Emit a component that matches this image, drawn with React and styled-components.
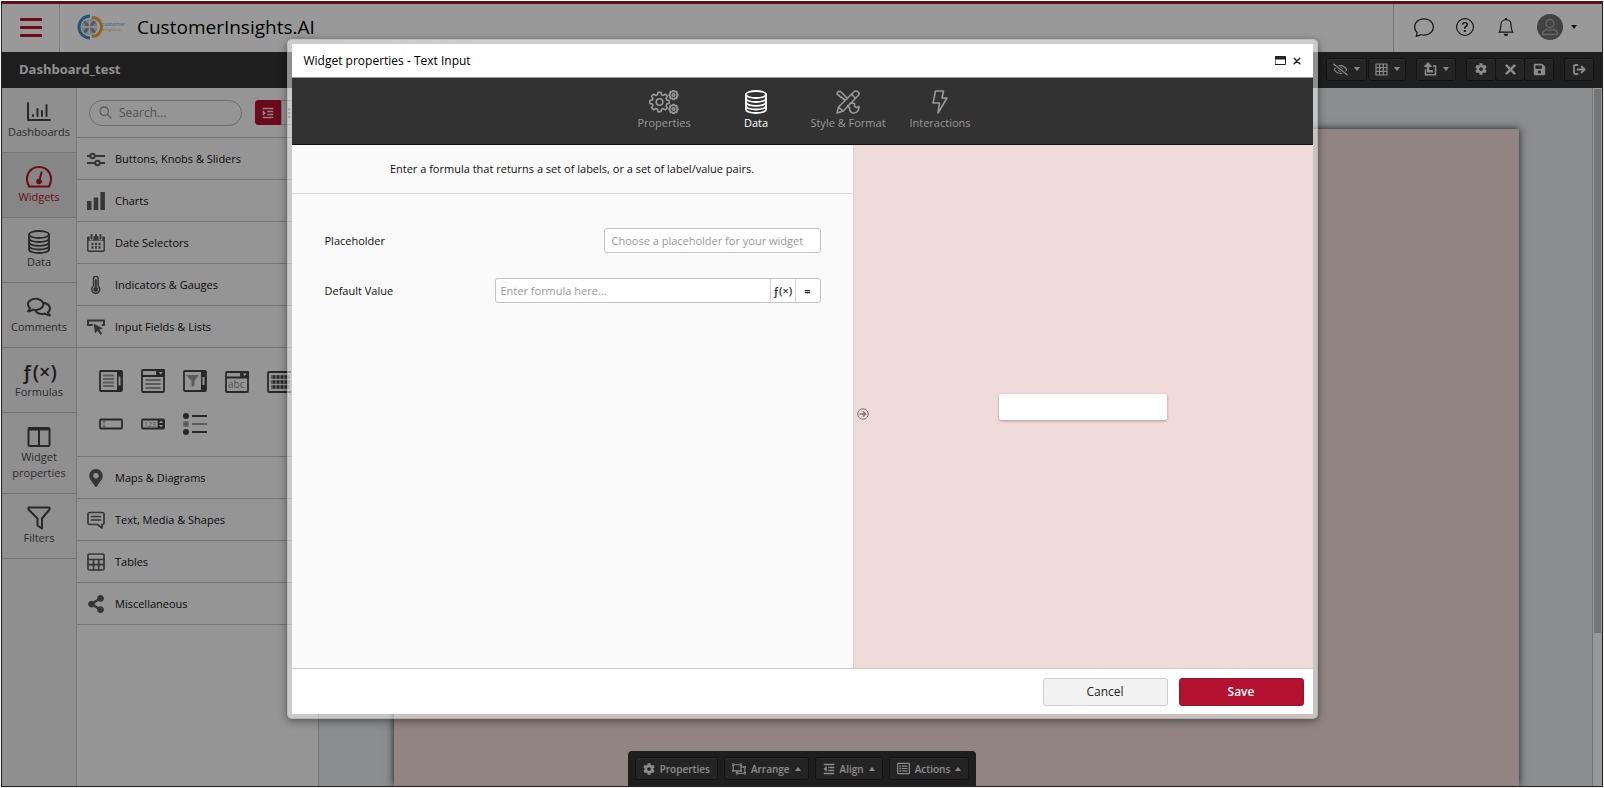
import React from 'react';
import styled, { createGlobalStyle, css } from 'styled-components';
import {
  FaCog, FaIndent, FaOutdent, FaListUl, FaRegObjectUngroup, FaRegListAlt, FaRegEyeSlash,
  FaMapMarkerAlt, FaShareAlt, FaRegComments, FaSave,
} from 'react-icons/fa';
import { BsChat, BsQuestionCircle, BsBell } from 'react-icons/bs';

const Global = createGlobalStyle`
  * { box-sizing: border-box; }
  html, body, #root { height: 100%; }
  body { margin: 0; background: #f4f4f4; font: 11px/16px "Open Sans", "Liberation Sans", sans-serif; color: #222; overflow: hidden; }
  button, input { font: inherit; color: inherit; margin: 0; padding: 0; }
  button { cursor: pointer; background: none; border: 0; }
  a { color: inherit; text-decoration: none; }
  svg { display: block; flex: none; }
`;

const Page = styled.div`height: 100%; padding: 1px;`;
const Frame = styled.div`
  position: relative; height: 100%; display: flex; flex-direction: column;
  border: 1px solid #222; background: #fff; overflow: hidden;
`;

/* Brand header */
const Header = styled.header`
  flex: none; height: 50px; display: flex; align-items: stretch;
  border-top: 2px solid #b41030; background: #fff;
`;
const MenuButton = styled.button`
  width: 58px; padding-bottom: 1px; display: flex; flex-direction: column; justify-content: center; align-items: center; gap: 5px;
  border-right: 1px solid #d0d0d0;
  i { width: 22px; height: 3px; border-radius: 1px; background: #b41030; }
`;
const Brand = styled.div`
  flex: 1; display: flex; align-items: center; gap: 10px; padding: 0 0 2px 17px;
  h1 { margin: 0; font-size: 19px; line-height: 26px; font-weight: 500; color: #000; }
`;
const Account = styled.div`
  display: flex; align-items: center; padding: 0 25px 2px 20px; gap: 21px;
  border-left: 1px solid #c8c8c8; color: #222;
`;
const IconButton = styled.button`min-width: 20px; display: flex; align-items: center; justify-content: center; gap: 8px;`;
const Avatar = styled.span`
  width: 26px; height: 26px; border-radius: 50%; background: #6e6e6e; color: #aaa;
  display: flex; align-items: center; justify-content: center;
`;
const Caret = styled.i`
  width: 0; height: 0; border: 3px solid transparent; 
  ${p => p.$up ? css`border-bottom: 4px solid; border-top: 0;` : css`border-top: 4px solid; border-bottom: 0;`}
`;

/* Dark dashboard bar */
const Bar = styled.div`
  flex: none; height: 36px; display: flex; align-items: center; justify-content: space-between;
  padding: 0 8px 2px 17px; background: #323232; color: #ededed;
  h2 { margin: 0; font-size: 13px; line-height: 20px; font-weight: 700; }
`;
const Tools = styled.div`display: flex; gap: 10px;`;
const ToolGroup = styled.div`display: flex; gap: ${p => p.$joined ? 0 : 1}px;`;
const DarkButton = styled.button`
  height: 23px; min-width: ${p => p.$width || 0}px; padding: 0 ${p => p.$pad || 0}px;
  display: flex; align-items: center; justify-content: center; gap: ${p => p.$gap || 6}px;
  background: #3d3d3d; border: 1px solid #202020; border-radius: 3px;
  box-shadow: inset 0 1px 0 #4a4a4a; color: #e6e6e6; font-size: 10px; font-weight: 600;
  ${ToolGroup} & + & { margin-left: ${p => p.$joined ? -1 : 0}px; }
`;

const Main = styled.div`flex: 1; min-height: 0; display: flex;`;

/* Navigation rail */
const Rail = styled.nav`flex: none; width: 75px; background: #eee; border-right: 1px solid #c4c4c4;`;
const RailItem = styled.a`
  display: flex; flex-direction: column; align-items: center; padding: 12px 4px;
  border-bottom: 1px solid #c4c4c4; text-align: center; color: ${p => p.$active ? '#b41030' : '#4c4c4c'};
  background: ${p => p.$active ? '#dfdfdf' : 'transparent'};
  svg { color: ${p => p.$active ? '#b41030' : '#444'}; }
`;
const Formula = styled.span`
  display: flex; align-items: center; justify-content: center; height: ${p => p.$small ? 16 : 24}px;
  font-size: ${p => p.$small ? 11 : 20}px; line-height: 1; font-weight: 600; color: #333;
`;

/* Widget library */
const Library = styled.aside`flex: none; width: 242px; background: #f9f9f9; border-right: 1px solid #c4c4c4;`;
const SearchRow = styled.div`
  height: 50px; display: flex; align-items: center; justify-content: space-between; padding: 0 11px 0 12px;
  border-bottom: 1px solid #c4c4c4;
`;
const SearchBox = styled.label`
  width: 153px; height: 26px; display: flex; align-items: center; gap: 7px; padding: 0 9px;
  border: 1px solid #b4b4b4; border-radius: 13px; color: #999; font-size: 12px;
  input { flex: 1; min-width: 0; border: 0; outline: 0; background: none; }
  input::placeholder { color: #888; }
`;
const Toggle = styled.div`display: flex;`;
const ToggleButton = styled.button`
  width: 26px; height: 25px; display: flex; align-items: center; justify-content: center;
  border: 1px solid ${p => p.$on ? '#b41030' : '#bbb'}; background: ${p => p.$on ? '#b41030' : '#f5f5f5'};
  border-radius: ${p => p.$on ? '3px 0 0 3px' : '0 3px 3px 0'}; color: ${p => p.$on ? '#f4d5db' : '#666'};
`;
const Category = styled.button`
  width: 100%; height: 42px; display: flex; align-items: center; gap: 10px; padding: 0 10px;
  border-bottom: 1px solid #c4c4c4; color: #111; text-align: left;
  svg { color: #5a5a5a; }
`;
const Palette = styled.div`
  display: grid; grid-template-columns: repeat(5, 24px); grid-auto-rows: 24px; gap: 19px 18px;
  padding: 21px 0 20px 22px; border-bottom: 1px solid #c4c4c4; color: #444;
`;

/* Canvas */
const Canvas = styled.main`
  flex: 1; min-width: 0; display: flex; background: #e8ebee;
`;
const Sheet = styled.div`
  flex: 1; margin: 41px 73px 0 75px; background: #f3dddb; box-shadow: 0 0 8px rgba(0, 0, 0, 0.8);
`;
const Track = styled.div`width: 10px; padding: 1px 1px 0; background: #fff; border-left: 1px solid #c4c4c4;`;
const Thumb = styled.div`height: 78%; background: #c1c1c1;`;

const Dock = styled.div`
  position: absolute; left: 0; right: 0; bottom: 0; display: flex; justify-content: center;
`;
const DockBar = styled.div`
  display: flex; gap: 6px; padding: 6px 7px; background: #323232; border-radius: 4px 4px 0 0;
`;

/* Dialog */
const Backdrop = styled.div`
  position: absolute; inset: 0; padding: 37px 20px 0; background: rgba(0, 0, 0, 0.4);
`;
const Dialog = styled.section`
  width: 100%; max-width: 1031px; height: calc(100% - 67px); margin: 0 auto; display: flex; flex-direction: column;
  border: 5px solid rgba(255, 255, 255, 0.5); border-radius: 5px; background: #fff; background-clip: padding-box;
  box-shadow: 0 2px 8px rgba(0, 0, 0, 0.45);
`;
const DialogTitle = styled.header`
  flex: none; height: 34px; display: flex; align-items: center; padding: 0 9px 0 12px; color: #222;
  border-bottom: 1px solid #999;
  h3 { flex: 1; margin: 0; font-size: 12px; font-weight: 400; color: #000; }
`;
const WindowButton = styled.button`width: 13px; margin-left: 4px; display: flex; justify-content: center;`;
const Tabs = styled.nav`
  flex: none; height: 67px; display: flex; justify-content: center; background: #323232; border-bottom: 1px solid #111;
`;
const Tab = styled.button`
  width: 92px; padding: 12px 0; display: flex; flex-direction: column; align-items: center; gap: 1px;
  color: ${p => p.$active ? '#fff' : '#999'}; white-space: nowrap;
  ${p => p.$active && css`font-weight: 500;`}
`;
const DialogBody = styled.div`flex: 1; min-height: 0; display: flex;`;
const FormPane = styled.div`flex: 55 1 0; background: #fafafa; border-right: 1px solid #d0d0d0;`;
const Hint = styled.p`
  margin: 0; padding: 16px; text-align: center; color: #111; border-bottom: 1px solid #d8d8d8;
`;
const Fields = styled.form`padding: 34px 32px 34px 33px; display: flex; flex-direction: column; gap: 25px;`;
const Field = styled.div`
  height: 25px; display: flex; align-items: center; justify-content: space-between;
  label { color: #111; }
`;
const InputGroup = styled.div`
  width: ${p => p.$width}px; height: 25px; display: flex; background: #fff; border: 1px solid #c4c4c4; border-radius: 3px;
  input { flex: 1; min-width: 0; padding: 0 ${p => p.$pad}px; border: 0; outline: 0; background: none; }
  input::placeholder { color: #999; opacity: 1; }
  button { width: 25px; border-left: 1px solid #d4d4d4; display: flex; justify-content: center; align-items: center; font-weight: 700; }
`;
const Preview = styled.div`
  position: relative; flex: 45 1 0; display: flex; align-items: center; justify-content: center; background: #f0dbdb;
`;
const PreviewInput = styled.input`
  width: 168px; height: 26px; border: 0; border-radius: 2px; background: #fff; box-shadow: 0 1px 3px rgba(80, 40, 40, 0.4);
`;
const Collapse = styled.button`position: absolute; left: 3px; top: calc(50% + 1px); color: #857777;`;
const DialogFooter = styled.footer`
  flex: none; height: 46px; display: flex; justify-content: flex-end; align-items: center; gap: 11px; padding-right: 9px;
  border-top: 1px solid #ccc;
`;
const ActionButton = styled.button`
  width: 125px; height: 28px; border-radius: 3px; font-size: 12px;
  ${p => p.$primary
    ? css`background: #b41030; border: 1px solid #9c1530; color: #fff; font-weight: 600;`
    : css`background: #f2f2f2; border: 1px solid #d0d0d0; color: #222; font-weight: 500;`}
`;

/* Line drawings */
const Svg = ({ w = 24, h = w, box = '0 0 24 24', sw = 2, children }) => (
  <svg width={w} height={h} viewBox={box} fill="none" stroke="currentColor" strokeWidth={sw}
    strokeLinecap="round" strokeLinejoin="round" aria-hidden="true">{children}</svg>
);

const Logo = () => (
  <Svg w={50} h={26} box="0 0 50 26" sw={2.4}>
    <path d="M13 2A11 11 0 0 0 13 24" stroke="#3b8cc4" strokeWidth="3" strokeLinecap="butt" />
    <path d="M15 3.500A9.500 9.500 0 0 1 15 22.500" stroke="#e8a33c" strokeWidth="3" strokeLinecap="butt" />
    <circle cx="12.500" cy="13" r="8" fill="#c9cdd2" stroke="none" />
    <path d="M8 8.500l9 9M17 8.500l-9 9" stroke="#8d949b" strokeWidth="3" />
    <path d="M12.500 6v14M5.500 13h14" stroke="#f4f4f4" strokeWidth="1.500" />
    <text x="25" y="12" fontSize="5" fontWeight="600" fill="#8db4d3" stroke="none">customer</text>
    <text x="25" y="17" fontSize="4" fontWeight="600" fill="#e5c289" stroke="none">insights.ai</text>
  </Svg>
);
const ChartAxes = () => (
  <Svg><path d="M1 3v17h22" /><path d="M6 15v1M10.500 9v7M15 11v5M19.500 5v11" /></Svg>
);
const Gauge = () => (
  <Svg w={28} h={24} box="0 0 28 24">
    <path d="M4 21.500C-1 12 4 2 14 2s15 10 10 19.500z" />
    <path d="M16.500 7.500L14.500 15" /><circle cx="14" cy="16.500" r="1.800" fill="currentColor" />
  </Svg>
);
const Database = () => (
  <Svg sw={1.800}>
    <ellipse cx="12" cy="4.500" rx="10" ry="3.500" />
    <path d="M2 4.500v15c0 2 4.500 3.500 10 3.500s10-1.500 10-3.500v-15" />
    <path d="M2 8.500c0 2 4.500 3.500 10 3.500s10-1.500 10-3.500M2 12.300c0 2 4.500 3.500 10 3.500s10-1.500 10-3.500M2 16c0 2 4.500 3.500 10 3.500s10-1.500 10-3.500" />
  </Svg>
);
const Columns = () => (
  <Svg><rect x="1.500" y="3" width="21" height="18" rx="1" /><path d="M2 4.500h20M12 4v17" /></Svg>
);
const Funnel = () => <Svg><path d="M1.500 1.500h21v2l-7.500 9V22.500l-4.500-3V12.500L1.500 3.500z" /></Svg>;
const Sliders = () => (
  <Svg w={18} box="0 0 18 18">
    <path d="M0 6h3M8 6h10M0 13h8M13 13h5" strokeLinecap="butt" /><circle cx="5.500" cy="6" r="2.200" /><circle cx="10.500" cy="13" r="2.200" />
  </Svg>
);
const Bars = () => (
  <Svg w={18} box="0 0 18 18"><path fill="currentColor" stroke="none" d="M0 9h4.500v9H0zM6.700 5.500h4.500V18H6.700zM13.400 0h4.500v18h-4.500z" /></Svg>
);
const Calendar = () => (
  <Svg w={18} box="0 0 18 18" sw={1.500}>
    <rect x=".8" y="3" width="16.400" height="14.200" rx="1" />
    <path d="M1 5h16" strokeWidth="3.500" /><path d="M4.500 .5v4M13.500 .5v4" stroke="#f9f9f9" strokeWidth="4" /><path d="M4.500 1v3.500M13.500 1v3.500M9 1v3" strokeWidth="2" />
    <path d="M4.500 10h9M4.500 13.500h9" strokeWidth="2.400" strokeDasharray="2 1.500" strokeLinecap="butt" />
  </Svg>
);
const Thermometer = () => (
  <Svg w={18} box="0 0 18 18" sw={1.500}>
    <path d="M6.500 10V2.500a2.300 2.300 0 0 1 4.600 0V10a4 4 0 1 1-4.600 0z" /><path d="M8.800 4v9" strokeWidth="2" /><circle cx="8.800" cy="13.500" r="1.700" fill="currentColor" />
  </Svg>
);
const InputCursor = () => (
  <Svg w={18} box="0 0 18 18">
    <path d="M5 7H1V2.500h16V7h-1.500" /><path d="M6.500 5.500l9.500 5-3.600 1 2.800 4-1.900 1.300-2.700-4L8 15.500z" fill="currentColor" stroke="none" />
  </Svg>
);
const TextBubble = () => (
  <Svg w={18} box="0 0 18 18" sw={1.700}><path d="M2.500 1.500h13a1.500 1.500 0 0 1 1.500 1.500v9a1.500 1.500 0 0 1-1.500 1.500H15V17l-4.500-3.500h-8A1.500 1.500 0 0 1 1 12V3a1.500 1.500 0 0 1 1.500-1.500zM4.500 5.500h9M4.500 9h9" /></Svg>
);
const TableIcon = () => (
  <Svg w={18} box="0 0 18 18" sw={1.700}><rect x="1" y="1" width="16" height="16" rx="1.200" /><path d="M1 6.500h16M1 11.700h16M6.500 6.500V17M11.700 6.500V17" /></Svg>
);
const ListScroll = () => (
  <Svg sw={1.800}><rect x="1" y="2" width="22" height="20" rx="1" /><path d="M4 6.500h11M4 10h11M4 13.500h11M4 17h11" stroke="#999" strokeLinecap="butt" /><path d="M20.500 3v18" strokeWidth="5" strokeLinecap="butt" /><path d="M20.500 7.500v9" stroke="#f9f9f9" strokeWidth="2" strokeLinecap="butt" /></Svg>
);
const DropList = () => (
  <Svg sw={1.800}><rect x="1" y="1" width="22" height="22" rx="1" /><path d="M1 7h22" /><path d="M16 1h7v6h-7z" fill="currentColor" /><path d="M17.800 3h4l-2 2.500z" fill="#f9f9f9" stroke="none" /><path d="M4.500 11h15M4.500 15h15M4.500 19h15" stroke="#999" strokeLinecap="butt" /></Svg>
);
const FilterScroll = () => (
  <Svg sw={1.800}><rect x="1" y="2" width="22" height="20" rx="1" /><path d="M3 6h13l-4.500 6v4.500l-3 1.500V12z" fill="#999" stroke="none" /><path d="M20.500 3v18" strokeWidth="5" strokeLinecap="butt" /><path d="M20.500 8v8" stroke="#f9f9f9" strokeWidth="2" strokeLinecap="butt" /></Svg>
);
const TextDrop = () => (
  <Svg sw={1.800}><rect x="1" y="3" width="22" height="20" rx="1" /><path d="M1 8.500h22" /><path d="M16 3h7v5h-7z" fill="currentColor" /><path d="M17.800 4.500h4l-2 2.500z" fill="#f9f9f9" stroke="none" /><text x="3" y="19" fontSize="10" fill="#888" stroke="none">abc</text></Svg>
);
const TagCloud = () => (
  <Svg sw={1.800}><rect x="1" y="3" width="26" height="20" rx="1" /><path d="M4 8h19M4 13h19M4 18h19" stroke="#999" strokeWidth="4" strokeLinecap="butt" /><path d="M6 8h16M6 13h16M6 18h16" strokeWidth="3" strokeDasharray="2 2" strokeLinecap="butt" /></Svg>
);
const TextField = () => (
  <Svg sw={1.800}><rect x="1" y="7.500" width="22" height="9" rx="1" /><path d="M4 9.500h2M4 14.500h2M5 9.500v5" stroke="#999" strokeWidth="1" /></Svg>
);
const NumberField = () => (
  <Svg sw={1.800}><rect x="1" y="7.500" width="22" height="9" rx="1" /><path d="M17.500 8h5v8h-5z" fill="currentColor" /><path d="M18 11l2-2.500 2 2.500zM18 13l2 2.500 2-2.500z" fill="#f9f9f9" stroke="none" /><text x="3" y="15" fontSize="7" fill="#888" stroke="none">123</text></Svg>
);
const RadioList = () => (
  <Svg><circle cx="3" cy="4" r="3" fill="currentColor" stroke="none" /><circle cx="3" cy="12" r="3" fill="#999" stroke="none" /><circle cx="3" cy="20" r="3" fill="currentColor" stroke="none" /><path d="M9 4h15M9 20h15" strokeLinecap="butt" /><path d="M9 12h15" stroke="#999" strokeLinecap="butt" /></Svg>
);
const gearPath = (cx, cy, r, teeth, depth) => {
  const pts = [];
  for (let i = 0; i < teeth; i += 1) {
    [[-0.32, r - depth], [-0.2, r], [0.2, r], [0.32, r - depth]].forEach(([o, rad]) => {
      const a = ((i + o) / teeth) * Math.PI * 2 - Math.PI / 2;
      pts.push(`${(cx + rad * Math.cos(a)).toFixed(2)} ${(cy + rad * Math.sin(a)).toFixed(2)}`);
    });
  }
  return `M${pts.join('L')}z`;
};
const Gears = () => (
  <Svg w={30} h={24} box="0 0 30 24" sw={1.600}>
    <path d={gearPath(10.5, 12, 9.8, 8, 2.2)} /><circle cx="10.500" cy="12" r="3.300" />
    <path d={gearPath(24.5, 5, 4.4, 8, 0.8)} /><circle cx="24.500" cy="5" r="1.300" />
    <path d={gearPath(24.5, 19, 4.4, 8, 0.8)} /><circle cx="24.500" cy="19" r="1.300" />
  </Svg>
);
const StyleTools = () => (
  <Svg sw={1.600}>
    <path d="M1 23l1.500-6L18 1.800a2.600 2.600 0 0 1 4 4L7 21.200zM15.500 4.300l4 4M2.500 17l4.500 4.200" />
    <path d="M9 10L1.500 4.500C.5 3 2 .8 4.500 1.500L11 8M14 13.500c2-1 3.500-.5 4.500 0v2.500c.5 1.500 1 1.800 2.500 1.500l1.800-1.200c.5 3.400-1.300 6.700-4.800 6.700-3 0-5-2.500-4.300-5l-2.200-2.500" />
  </Svg>
);
const Bolt = () => <Svg sw={1.600}><path d="M7.500 1h8l-1.500 7h5L10 23l1.500-10H5z" /></Svg>;
const Lens = () => <Svg w={13} box="0 0 13 13" sw={1.300}><circle cx="5.200" cy="5.200" r="4.200" /><path d="M8.500 8.500L12 12" /></Svg>;
const Person = () => (
  <Svg w={18} box="0 0 18 18" sw={1.300}><circle cx="9" cy="5.500" r="4" /><path d="M1.500 16.500c0-3 1.500-4.500 4.500-5 2 1.200 4 1.200 6 0 3 .5 4.500 2 4.500 5z" /></Svg>
);
const Grid = () => <Svg w={13} box="0 0 13 13" sw={1.200}><path d="M1 1h11v11H1zM1 4.700h11M1 8.300h11M4.700 1v11M8.300 1v11" /></Svg>;
const UpBox = () => (
  <Svg w={14} box="0 0 14 14" sw={1.600}>
    <path d="M5 3.500v5.800h5" strokeWidth="2.400" strokeLinejoin="miter" strokeLinecap="butt" />
    <path d="M.5 5L5 0l4.500 5z" fill="currentColor" stroke="none" />
    <path d="M2.500 8v4.800h10V4h-2" strokeLinejoin="miter" />
  </Svg>
);
const Cross = ({ w = 11, sw = 2.4 }) => <Svg w={w} box="0 0 10 10" sw={sw}><path d="M1.500 1.500l7 7M8.500 1.500l-7 7" /></Svg>;
const Exit = () => <Svg w={13} h={11} box="0 0 13 11" sw={1.500}><path d="M4.500 1H2.500A1.500 1.500 0 0 0 1 2.500v6A1.500 1.500 0 0 0 2.500 10h2M4.500 5.500H11M8.500 2.500l3.200 3-3.200 3" strokeWidth="1.800" /></Svg>;
const Maximize = () => <Svg w={11} h={9} box="0 0 11 9" sw={1}><rect x=".5" y=".5" width="10" height="8" /><path d="M1 2h9" strokeWidth="3" /></Svg>;
const ArrowCircle = () => <Svg w={12} box="0 0 12 12" sw={1}><circle cx="6" cy="6" r="5.300" /><path d="M3 6h5.500M6.300 3.700L8.700 6 6.300 8.300" strokeWidth="1.300" /></Svg>;

const Fx = ({ small }) => <Formula $small={small}>ƒ(×)</Formula>;

const railItems = [
  ['Dashboards', <ChartAxes />], ['Widgets', <Gauge />], ['Data', <Database />], ['Comments', <FaRegComments size={24} />],
  ['Formulas', <Fx />], ['Widget properties', <Columns />], ['Filters', <Funnel />],
];
const upperCategories = [
  ['Buttons, Knobs & Sliders', <Sliders />], ['Charts', <Bars />], ['Date Selectors', <Calendar />],
  ['Indicators & Gauges', <Thermometer />], ['Input Fields & Lists', <InputCursor />],
];
const lowerCategories = [
  ['Maps & Diagrams', <FaMapMarkerAlt size={18} />], ['Text, Media & Shapes', <TextBubble />],
  ['Tables', <TableIcon />], ['Miscellaneous', <FaShareAlt size={18} />],
];
const tabs = [['Properties', <Gears />], ['Data', <Database />], ['Style & Format', <StyleTools />], ['Interactions', <Bolt />]];
const dockItems = [
  ['Properties', <FaCog size={12} />, false], ['Arrange', <FaRegObjectUngroup size={14} />, true],
  ['Align', <FaOutdent size={12} />, true], ['Actions', <FaRegListAlt size={13} />, true],
];

const Categories = ({ items }) => items.map(([name, icon]) => <Category key={name}>{icon}{name}</Category>);

export default function App() {
  return (
    <Page>
      <Global />
      <Frame>
        <Header>
          <MenuButton aria-label="Menu"><i /><i /><i /></MenuButton>
          <Brand><Logo /><h1>CustomerInsights.AI</h1></Brand>
          <Account>
            <IconButton aria-label="Messages"><BsChat size={20} /></IconButton>
            <IconButton aria-label="Help"><BsQuestionCircle size={18} /></IconButton>
            <IconButton aria-label="Notifications"><BsBell size={18} /></IconButton>
            <IconButton aria-label="Account"><Avatar><Person /></Avatar><Caret /></IconButton>
          </Account>
        </Header>
        <Bar>
          <h2>Dashboard_test</h2>
          <Tools>
            <ToolGroup>
              <DarkButton $width={41} aria-label="Visibility"><FaRegEyeSlash size={15} /><Caret /></DarkButton>
              <DarkButton $width={38} aria-label="Grid"><Grid /><Caret /></DarkButton>
            </ToolGroup>
            <DarkButton $width={40} aria-label="Publish"><UpBox /><Caret /></DarkButton>
            <ToolGroup $joined>
              <DarkButton $joined $width={30} aria-label="Settings"><FaCog size={12} /></DarkButton>
              <DarkButton $joined $width={30} aria-label="Discard"><Cross /></DarkButton>
              <DarkButton $joined $width={30} aria-label="Save dashboard"><FaSave size={13} /></DarkButton>
            </ToolGroup>
            <DarkButton $width={30} aria-label="Exit"><Exit /></DarkButton>
          </Tools>
        </Bar>
        <Main>
          <Rail>
            {railItems.map(([name, icon]) => (
              <RailItem key={name} href="#" $active={name === 'Widgets'}>{icon}{name}</RailItem>
            ))}
          </Rail>
          <Library>
            <SearchRow>
              <SearchBox><Lens /><input aria-label="Search" placeholder="Search..." /></SearchBox>
              <Toggle>
                <ToggleButton $on aria-label="Grouped"><FaIndent size={12} /></ToggleButton>
                <ToggleButton aria-label="List"><FaListUl size={12} /></ToggleButton>
              </Toggle>
            </SearchRow>
            <Categories items={upperCategories} />
            <Palette>
              <ListScroll /><DropList /><FilterScroll /><TextDrop /><TagCloud />
              <TextField /><NumberField /><RadioList />
            </Palette>
            <Categories items={lowerCategories} />
          </Library>
          <Canvas><Sheet /><Track><Thumb /></Track></Canvas>
        </Main>
        <Dock>
          <DockBar>
            {dockItems.map(([name, icon, caret]) => (
              <DarkButton key={name} $pad={7} $gap={5}>{icon}{name}{caret && <Caret $up />}</DarkButton>
            ))}
          </DockBar>
        </Dock>
        <Backdrop>
          <Dialog role="dialog" aria-labelledby="dialog-title">
            <DialogTitle>
              <h3 id="dialog-title">Widget properties - Text Input</h3>
              <WindowButton aria-label="Maximize"><Maximize /></WindowButton>
              <WindowButton aria-label="Close"><Cross w={8} sw={1.8} /></WindowButton>
            </DialogTitle>
            <Tabs>
              {tabs.map(([name, icon]) => <Tab key={name} $active={name === 'Data'}>{icon}{name}</Tab>)}
            </Tabs>
            <DialogBody>
              <FormPane>
                <Hint>Enter a formula that returns a set of labels, or a set of label/value pairs.</Hint>
                <Fields>
                  <Field>
                    <label htmlFor="placeholder">Placeholder</label>
                    <InputGroup $width={217} $pad={7}><input id="placeholder" placeholder="Choose a placeholder for your widget" /></InputGroup>
                  </Field>
                  <Field>
                    <label htmlFor="default">Default Value</label>
                    <InputGroup $width={326} $pad={5}>
                      <input id="default" placeholder="Enter formula here..." />
                      <button type="button" aria-label="Formula editor"><Fx small /></button>
                      <button type="button">=</button>
                    </InputGroup>
                  </Field>
                </Fields>
              </FormPane>
              <Preview>
                <Collapse aria-label="Collapse preview"><ArrowCircle /></Collapse>
                <PreviewInput aria-label="Text input preview" />
              </Preview>
            </DialogBody>
            <DialogFooter>
              <ActionButton>Cancel</ActionButton>
              <ActionButton $primary>Save</ActionButton>
            </DialogFooter>
          </Dialog>
        </Backdrop>
      </Frame>
    </Page>
  );
}
